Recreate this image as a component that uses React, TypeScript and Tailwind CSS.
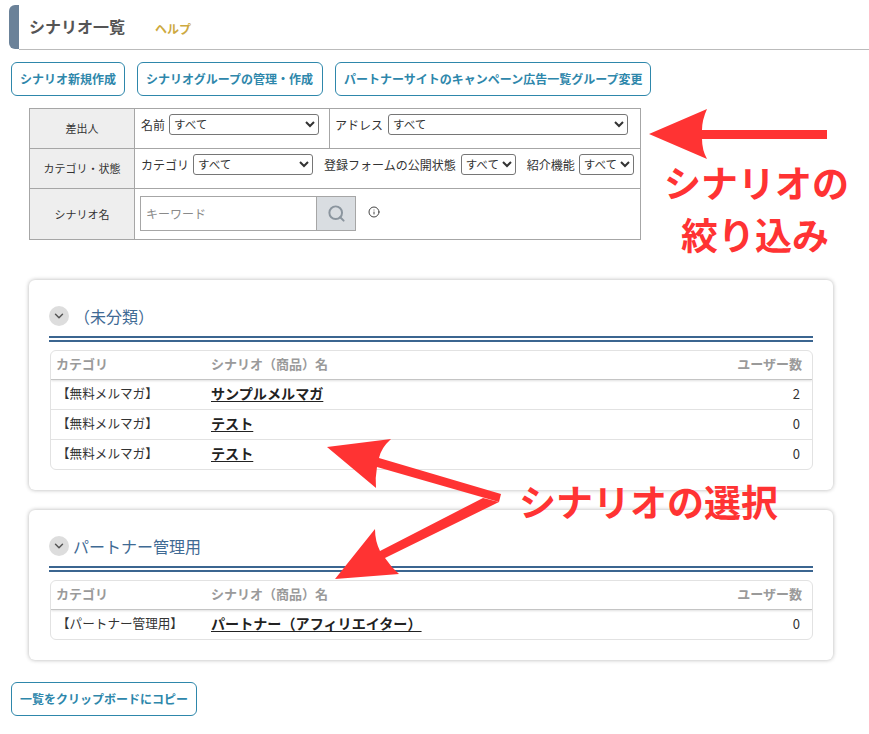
import { ChevronDown, Info, Search } from "lucide-react";

const JP = "font-['Noto_Sans_CJK_JP','Liberation_Sans',sans-serif]";

const BTN =
	"flex h-[34px] items-center rounded-md border border-[#2e87ab] bg-white px-[8px] text-[12px] font-bold text-[#2e87ab]";

const SELECT =
	"h-[21px] rounded-[3px] border border-[#767676] bg-white pb-[2px] text-[11.5px] leading-none text-[#333]";

function Select({ className }: { className: string }) {
	return (
		<select className={`${SELECT} ${className}`}>
			<option>すべて</option>
		</select>
	);
}

function ScenarioCard({
	title,
	titleClass,
	rows,
	className,
}: {
	title: string;
	titleClass: string;
	rows: { cat: string; name: string; count: number }[];
	className: string;
}) {
	return (
		<section
			className={`ml-[29px] w-[804px] rounded-md bg-white px-[20px] pt-[26px] pb-[20px] shadow-[0_0_4px_rgba(0,0,0,0.3)] ${className}`}>
			<div className="flex h-[20px] items-center">
				<span className="flex h-[20px] w-[20px] items-center justify-center rounded-full bg-[#dddddd]">
					<ChevronDown size={14} strokeWidth={2.5} className="text-[#555]" />
				</span>
				<h2 className={`text-[16px] font-normal text-[#3f6a94] ${titleClass}`}>{title}</h2>
			</div>
			<div className="mt-[10px] h-[6px] border-y-2 border-[#3b6590]" />
			<div className="mt-[8px] ml-[1px] overflow-hidden rounded-md border border-[#e2e2e2]">
				<div className="flex h-[29px] items-center border-b border-[#c4c4c4] pb-[2px] text-[13px] font-bold text-[#9a9a9a] shadow-[0_1px_2px_rgba(0,0,0,0.12)]">
					<span className="w-[160px] pl-[5px]">カテゴリ</span>
					<span className="flex-1">シナリオ（商品）名</span>
					<span className="pr-[10px]">ユーザー数</span>
				</div>
				{rows.map((r, i) => (
					<div
						key={i}
						className="flex h-[30px] items-center border-b border-[#e2e2e2] pb-[2px] text-[12.6px] text-[#333] last:h-[29px] last:border-b-0">
						<span className="w-[160px] pl-[6px]">{r.cat}</span>
						<a className="flex-1 text-[14.1px] font-bold text-[#222] underline underline-offset-2">{r.name}</a>
						<span className="pr-[12px] text-[13px]">{r.count}</span>
					</div>
				))}
			</div>
		</section>
	);
}

export default function App() {
	return (
		<div className={`relative h-[734px] w-[869px] overflow-hidden bg-white ${JP}`}>
			{/* Page heading */}
			<header className="ml-[9px] flex pt-[5px]">
				<div className="h-[44px] w-[10px] rounded-l-md bg-[#6b8299]" />
				<div className="flex h-[45px] flex-1 items-start border-b border-[#bbbbbb] pl-[10px] pt-[11px]">
					<h1 className="text-[16px] leading-[20px] font-bold text-[#555]">シナリオ一覧</h1>
					<a className="ml-[30px] pt-[5px] text-[12px] leading-[16px] font-bold text-[#cda93f]">ヘルプ</a>
				</div>
			</header>

			<div className="ml-[11px] mt-[12px] flex gap-[12px]">
				<button className={BTN}>シナリオ新規作成</button>
				<button className={`${BTN} w-[186px]`}>シナリオグループの管理・作成</button>
				<button className={BTN}>パートナーサイトのキャンペーン広告一覧グループ変更</button>
			</div>

			{/* Filters */}
			<div className="ml-[29px] mt-[12px] w-[612px] border border-[#a6a6a6] text-[12px] text-[#333]">
				<div className="flex h-[40px] border-b border-[#a6a6a6]">
					<div className="flex w-[105px] items-center justify-center border-r border-[#a6a6a6] bg-[#eeeeee] text-[11px]">
						差出人
					</div>
					<div className="flex h-[26px] w-[194px] items-center gap-[4px] self-start pl-[6px] pt-[5px]">
						<span>名前</span>
						<Select className="w-[150px]" />
					</div>
					<div className="flex flex-1 items-start gap-[5px] border-l border-[#a6a6a6] pl-[5px] pt-[5px]">
						<span className="leading-[21px]">アドレス</span>
						<Select className="w-[240px]" />
					</div>
				</div>
				<div className="flex h-[40px] border-b border-[#a6a6a6]">
					<div className="flex w-[105px] items-center justify-center border-r border-[#a6a6a6] bg-[#eeeeee] text-[11px]">
						カテゴリ・状態
					</div>
					<div className="flex items-start pl-[6px] pt-[5px] leading-[21px]">
						<span>カテゴリ</span>
						<Select className="ml-[4px] w-[120px]" />
						<span className="ml-[11px]">登録フォームの公開状態</span>
						<Select className="ml-[5px] w-[55px]" />
						<span className="ml-[11px]">紹介機能</span>
						<Select className="ml-[4px] w-[55px]" />
					</div>
				</div>
				<div className="flex h-[50px]">
					<div className="flex w-[105px] items-center justify-center border-r border-[#a6a6a6] bg-[#eeeeee] text-[11px]">
						シナリオ名
					</div>
					<div className="flex items-start pl-[5px] pt-[7px]">
						<div className="flex h-[35px] w-[216px] border border-[#a6a6a6]">
							<input
								placeholder="キーワード"
								className="w-[175px] bg-white pl-[5px] text-[12px] outline-none placeholder:text-[#8a8a8a]"
							/>
							<span className="flex flex-1 items-center justify-center border-l border-[#a6a6a6] bg-[#d9dde1]">
								<Search size={19} strokeWidth={2.5} className="text-[#8b959e]" />
							</span>
						</div>
						<Info size={12} className="ml-[12px] mt-[10px] text-[#444]" />
					</div>
				</div>
			</div>

			<ScenarioCard
				className="mt-[40px]"
				title="（未分類）"
				titleClass="ml-[5px]"
				rows={[
					{ cat: "【無料メルマガ】", name: "サンプルメルマガ", count: 2 },
					{ cat: "【無料メルマガ】", name: "テスト", count: 0 },
					{ cat: "【無料メルマガ】", name: "テスト", count: 0 },
				]}
			/>
			<ScenarioCard
				className="mt-[20px]"
				title="パートナー管理用"
				titleClass="ml-[4px]"
				rows={[{ cat: "【パートナー管理用】", name: "パートナー（アフィリエイター）", count: 0 }]}
			/>

			<div className="ml-[11px] mt-[22px] flex">
				<button className={BTN}>一覧をクリップボードにコピー</button>
			</div>

			{/* Red annotations drawn over the screenshot */}
			<svg className="absolute top-0 left-0" width="869" height="734" fill="#ff3333">
				<path d="M649,134 L707,109 Q702,120 702,130 L827,130 L827,139 L702,139 Q702,150 707,159 Z" />
				<path d="M327,447 L391,439 Q381,448 379,458 L501,494 L499,502 L377,467 Q375,478 376,488 Z" />
				<path d="M335,579 L375,529 Q375,541 380,551 L483,498 L499,502 L385,558 Q391,567 399,574 Z" />
			</svg>
			<p className="absolute top-[156px] left-[664px] text-[37px] leading-[52px] font-bold text-[#ff3333]">シナリオの</p>
			<p className="absolute top-[208px] left-[681px] text-[37px] leading-[52px] font-bold text-[#ff3333]">絞り込み</p>
			<p className="absolute top-[475px] left-[519px] text-[37px] leading-[52px] font-bold text-[#ff3333]">シナリオの選択</p>
		</div>
	);
}
